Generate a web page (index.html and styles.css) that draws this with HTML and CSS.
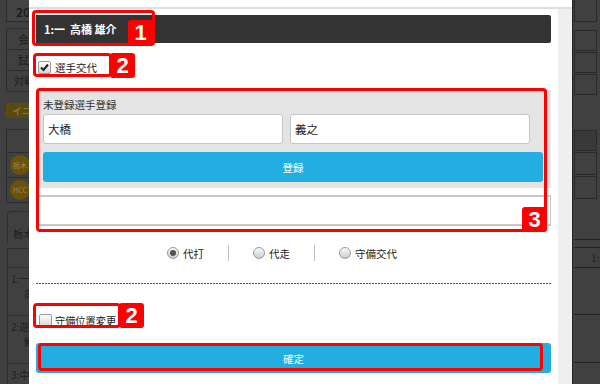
FILE: index.html
```html
<!DOCTYPE html>
<html lang="ja">
<head>
    <meta charset="UTF-8">
    <meta name="viewport" content="width=device-width, initial-scale=1.0">
    <title>選手交代</title>
    <link rel="stylesheet" href="styles.css">
</head>
<body>
<div class="screen">
    <!-- page behind the dialog, dimmed -->
    <div class="bg-left">
        <div class="bl-inner">
            <div class="bl-date">20</div>
            <div class="bl-info">
                <div class="bl-row">会</div>
                <div class="bl-row">試</div>
                <div class="bl-row small">対戦</div>
            </div>
            <div class="bl-inning">イニ</div>
            <div class="bl-score"></div>
            <div class="bl-team"><span class="bl-logo">栃木</span></div>
            <div class="bl-team"><span class="bl-logo">HCC</span></div>
            <div class="bl-tab">栃木</div>
            <div class="bl-table">
                <div class="bl-head"></div>
                <div class="bl-line"><span>1:一</span><span class="indent">高</span></div>
                <div class="bl-line"><span>2:遊</span><span class="indent">鮮</span></div>
                <div class="bl-line"><span>3:中</span></div>
            </div>
        </div>
    </div>

    <div class="modal">
        <div class="modal-top"></div>
        <div class="modal-main">
            <div class="modal-content">
                <div class="player-bar">1:一&nbsp;&nbsp;高橋 雄介</div>

                <div class="check-row">
                    <span class="checkbox checked">
                        <svg width="11" height="11" viewBox="0 0 11 11"><path d="M2 5.5 L4.5 8 L9 2.5" fill="none" stroke="#222" stroke-width="2"/></svg>
                    </span>
                    <span>選手交代</span>
                </div>

                <div class="register-panel">
                    <div class="panel-label">未登録選手登録</div>
                    <div class="name-row">
                        <input class="name-input" type="text" value="大橋">
                        <input class="name-input" type="text" value="義之">
                    </div>
                    <button class="btn-blue">登録</button>
                </div>

                <div class="search-box"></div>

                <div class="radio-row">
                    <span class="radio checked"></span><span>代打</span>
                    <span class="sep"></span>
                    <span class="radio"></span><span>代走</span>
                    <span class="sep"></span>
                    <span class="radio"></span><span>守備交代</span>
                </div>

                <div class="dashed"></div>

                <div class="check-row second">
                    <span class="checkbox"></span>
                    <span>守備位置変更</span>
                </div>

                <button class="btn-blue confirm">確定</button>
            </div>
            <div class="scroll-strip"></div>
        </div>

        <!-- annotation marks -->
        <div class="mark mark-1"></div>
        <div class="badge badge-1">1</div>
        <div class="mark mark-2a"></div>
        <div class="badge badge-2a">2</div>
        <div class="mark mark-3"></div>
        <div class="badge badge-3">3</div>
        <div class="mark mark-2b"></div>
        <div class="badge badge-2b">2</div>
        <div class="mark mark-ok"></div>
    </div>

    <div class="bg-right">
        <div class="br-box first"></div>
        <div class="br-box top-gap"></div>
        <div class="br-box"></div>
        <div class="br-box"></div>
        <div class="br-box dark big-gap"></div>
        <div class="br-box tall"></div>
        <div class="br-box tall"></div>
        <div class="br-rule r1"></div>
        <div class="br-rule r2"></div>
        <div class="br-text">1:</div>
        <div class="br-rule r3"></div>
        <div class="br-rule r4"></div>
        <div class="br-rule r5"></div>
    </div>
</div>
</body>
</html>
```

FILE: styles.css
```css
* {
    box-sizing: border-box;
}
body {
    margin: 0;
    font-family: "Noto Sans CJK JP", sans-serif;
    background: #404040;
}
.screen {
    display: flex;
    width: 600px;
    height: 384px;
    overflow: hidden;
}

/* dimmed page, left */
.bg-left {
    width: 29px;
    overflow: hidden;
    background: #404040;
}
.bl-inner {
    width: 80px;
    margin-left: 6px;
    color: #1e1e1e;
    font-size: 11px;
}
.bl-date {
    height: 22px;
    border: 1px solid #2c2c2c;
    border-top: none;
    background: #444;
    padding: 3px 0 0 9px;
    font-weight: bold;
    font-size: 12px;
}
.bl-info {
    margin-top: 6px;
    border: 1px solid #2c2c2c;
}
.bl-row {
    height: 21px;
    line-height: 20px;
    padding-left: 11px;
    border-bottom: 1px solid #2c2c2c;
}
.bl-row.small {
    height: 20px;
    padding-left: 7px;
    border-bottom: none;
    font-size: 10px;
}
.bl-inning {
    margin-top: 11px;
    height: 15px;
    line-height: 15px;
    background: #5b4a10;
    color: #8d8060;
    padding-left: 6px;
    font-size: 10px;
}
.bl-score {
    margin-top: 11px;
    height: 24px;
    border: 1px solid #2c2c2c;
}
.bl-team {
    height: 25px;
    border: 1px solid #2c2c2c;
    border-top: none;
    padding: 2px 0 0 3px;
}
.bl-logo {
    display: inline-block;
    width: 20px;
    height: 20px;
    border-radius: 50%;
    background: #6a520a;
    color: #9b8650;
    font-size: 7px;
    line-height: 20px;
    text-align: center;
}
.bl-tab {
    margin: 8px 0 0 1px;
    height: 32px;
    border: 1px solid #2c2c2c;
    border-bottom: none;
    border-radius: 4px 0 0 0;
    padding: 14px 0 0 5px;
    font-size: 10px;
}
.bl-table {
    margin: 5px 0 0 1px;
    border-left: 1px solid #2c2c2c;
}
.bl-head {
    height: 20px;
    border-top: 1px solid #2c2c2c;
    border-bottom: 1px solid #2c2c2c;
}
.bl-line {
    height: 48px;
    border-bottom: 1px solid #2c2c2c;
    padding: 3px 0 0 3px;
    font-size: 10px;
    display: flex;
    flex-direction: column;
}
.bl-line .indent {
    padding-left: 13px;
}

/* dialog */
.modal {
    position: relative;
    width: 543px;
    background: #fff;
    display: flex;
    flex-direction: column;
}
.modal-top {
    height: 9px;
    border-bottom: 2px solid #dedede;
}
.modal-main {
    flex: 1;
    display: flex;
}
.modal-content {
    flex: 1;
    padding: 6px 7px 0;
}
.scroll-strip {
    width: 14px;
    background: #efefef;
}
.player-bar {
    height: 28px;
    line-height: 28px;
    background: #333;
    border-radius: 0 2px 2px 0;
    color: #fff;
    font-weight: bold;
    font-size: 11px;
    padding-left: 8px;
}
.check-row {
    display: flex;
    align-items: center;
    gap: 4px;
    height: 14px;
    margin-top: 17px;
    padding-left: 2px;
    font-size: 10.5px;
    color: #222;
}
.check-row.second {
    margin-top: 29px;
    padding-left: 3px;
    gap: 3px;
    font-size: 10.2px;
}
.checkbox {
    width: 13px;
    height: 13px;
    border: 1px solid #9c9c9c;
    border-radius: 2px;
    background: linear-gradient(#fdfdfd, #d6d6d6);
    display: flex;
    align-items: center;
    justify-content: center;
}
.register-panel {
    margin-top: 16px;
    background: #e4e4e4;
    padding: 8px 8px 6px 7px;
}
.panel-label {
    font-size: 10.5px;
    line-height: 13px;
    color: #333;
}
.name-row {
    display: flex;
    gap: 7px;
    margin-top: 3px;
}
.name-input {
    width: 240px;
    height: 30px;
    margin: 0;
    border: 1px solid #c5c5c5;
    border-radius: 3px;
    background: #fff;
    padding: 0 4px;
    font-family: "Noto Sans CJK JP", sans-serif;
    font-size: 11.5px;
    color: #222;
}
.btn-blue {
    display: block;
    width: 100%;
    height: 30px;
    margin-top: 8px;
    border: none;
    border-radius: 3px;
    background: #23aee2;
    color: #fff;
    font-family: "Noto Sans CJK JP", sans-serif;
    font-size: 10.5px;
}
.btn-blue.confirm {
    margin-top: 16px;
}
.search-box {
    margin-top: 7px;
    height: 31px;
    border: 1px solid #c8c8c8;
    border-top-width: 2px;
    border-bottom-width: 2px;
}
.radio-row {
    display: flex;
    align-items: center;
    gap: 4px;
    height: 16px;
    margin-top: 19px;
    padding-left: 131px;
    font-size: 10.5px;
    color: #222;
}
.radio {
    position: relative;
    width: 12px;
    height: 12px;
    border: 1px solid #9a9a9a;
    border-radius: 50%;
    background: linear-gradient(#fafafa, #cdcdcd);
}
.radio.checked::after {
    content: "";
    position: absolute;
    left: 2px;
    top: 2px;
    width: 6px;
    height: 6px;
    border-radius: 50%;
    background: #505050;
}
.sep {
    width: 1px;
    height: 16px;
    background: #bdbdbd;
    margin: 0 20px;
}
.dashed {
    margin-top: 22px;
    height: 1px;
    background: repeating-linear-gradient(90deg, #555 0 2px, transparent 2px 3px);
}

/* annotations */
.mark {
    position: absolute;
    border: 3px solid #f00;
    border-radius: 4px;
}
.badge {
    position: absolute;
    width: 25px;
    height: 26px;
    border-radius: 3px;
    background: #f00;
    color: #fff;
    font-family: "Liberation Sans", sans-serif;
    font-weight: bold;
    font-size: 22px;
    line-height: 26px;
    text-align: center;
}
.mark-1 { left: 3px; top: 10px; width: 123px; height: 36px; }
.badge-1 { left: 99px; top: 20px; }
.mark-2a { left: 4px; top: 53px; width: 79px; height: 24px; }
.badge-2a { left: 81px; top: 53px; height: 25px; line-height: 25px; }
.mark-3 { left: 7px; top: 88px; width: 511px; height: 144px; }
.badge-3 { left: 493px; top: 207px; height: 25px; line-height: 25px; }
.mark-2b { left: 4px; top: 303px; width: 88px; height: 25px; }
.badge-2b { left: 90px; top: 303px; height: 25px; line-height: 25px; }
.mark-ok { left: 9px; top: 343px; width: 505px; height: 28px; }

/* dimmed page, right */
.bg-right {
    flex: 1;
    position: relative;
    border-left: 1px solid #232323;
    background: #404040;
    padding-left: 1px;
}
.br-box {
    width: 23px;
    height: 21px;
    border: 1px solid #2a2a2a;
    margin-top: 1px;
}
.br-box.first {
    height: 22px;
    margin-top: 0;
    border-top: none;
}
.br-box.top-gap {
    margin-top: 8px;
}
.br-box.dark {
    background: #393939;
}
.br-box.big-gap {
    margin-top: 35px;
}
.br-box.tall {
    height: 23px;
}
.br-rule {
    position: absolute;
    left: 1px;
    width: 26px;
    height: 1px;
    background: #222;
}
.r1 { top: 239px; }
.r2 { top: 247px; }
.r3 { top: 267px; }
.r4 { top: 314px; }
.r5 { top: 362px; }
.br-text {
    position: absolute;
    left: 18px;
    top: 250px;
    font-size: 10px;
    color: #1e1e1e;
}
```
